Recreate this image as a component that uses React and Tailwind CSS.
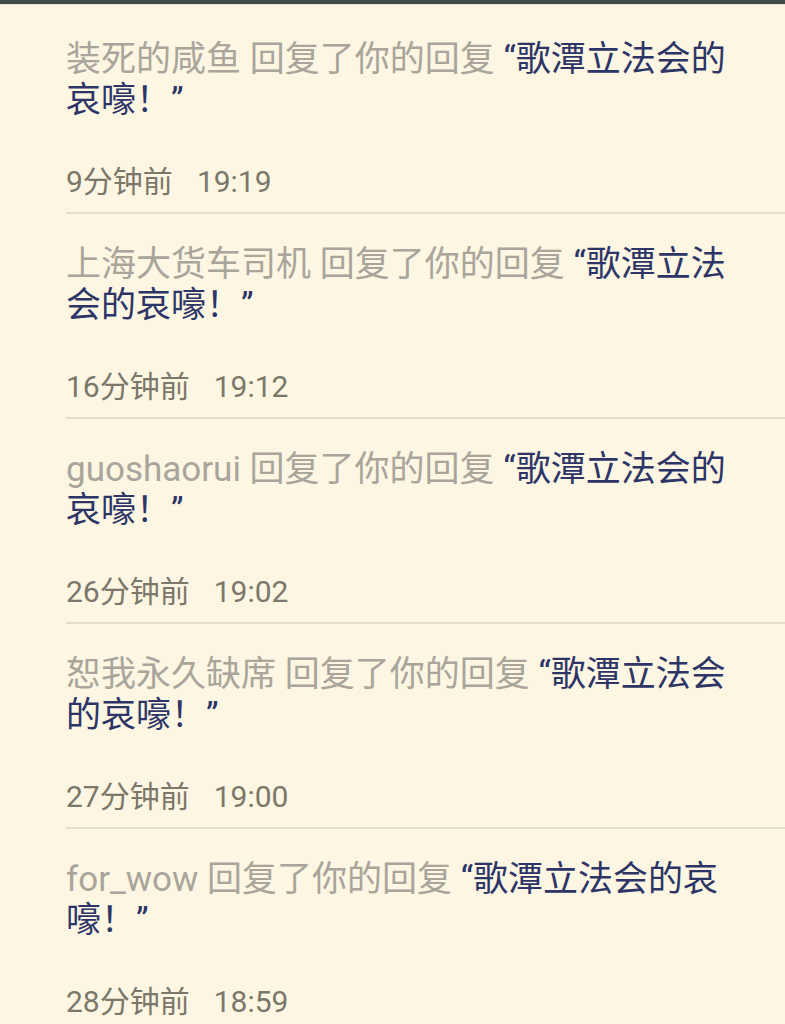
import React from "react";

const replies = [
  { user: "装死的咸鱼", ago: "9分钟前", time: "19:19" },
  { user: "上海大货车司机", ago: "16分钟前", time: "19:12" },
  { user: "guoshaorui", ago: "26分钟前", time: "19:02" },
  { user: "恕我永久缺席", ago: "27分钟前", time: "19:00" },
  { user: "for_wow", ago: "28分钟前", time: "18:59" },
];

const ReplyItem = ({ reply }) => {
  return (
    <div className="pt-[30px] pb-[12px] border-b-2 border-[#e6dfc8]">
      <div className="pr-[48px] text-[35px] leading-[41px] text-[#2c3566]">
        <span className="text-[#a9a59b]">{reply.user} 回复了你的回复 </span>
        “歌潭立法会的哀嚎！”
      </div>
      <div className="mt-[43px] text-[30px] leading-[36px] text-[#7b776a]">
        {reply.ago}
        <span className="ml-[24px]">{reply.time}</span>
      </div>
    </div>
  );
};

export default function App() {
  return (
    <div className="h-[1024px] overflow-hidden bg-[#fdf6e3] font-[Roboto,'Noto_Sans_CJK_SC',sans-serif]">
      <div className="h-[4px] bg-[#424b4c]" />
      <div className="h-px bg-[#e9e3cf]" />
      <div className="pl-[66px] pt-[4px]">
        {replies.map((reply) => (
          <ReplyItem key={reply.user} reply={reply} />
        ))}
      </div>
    </div>
  );
}
